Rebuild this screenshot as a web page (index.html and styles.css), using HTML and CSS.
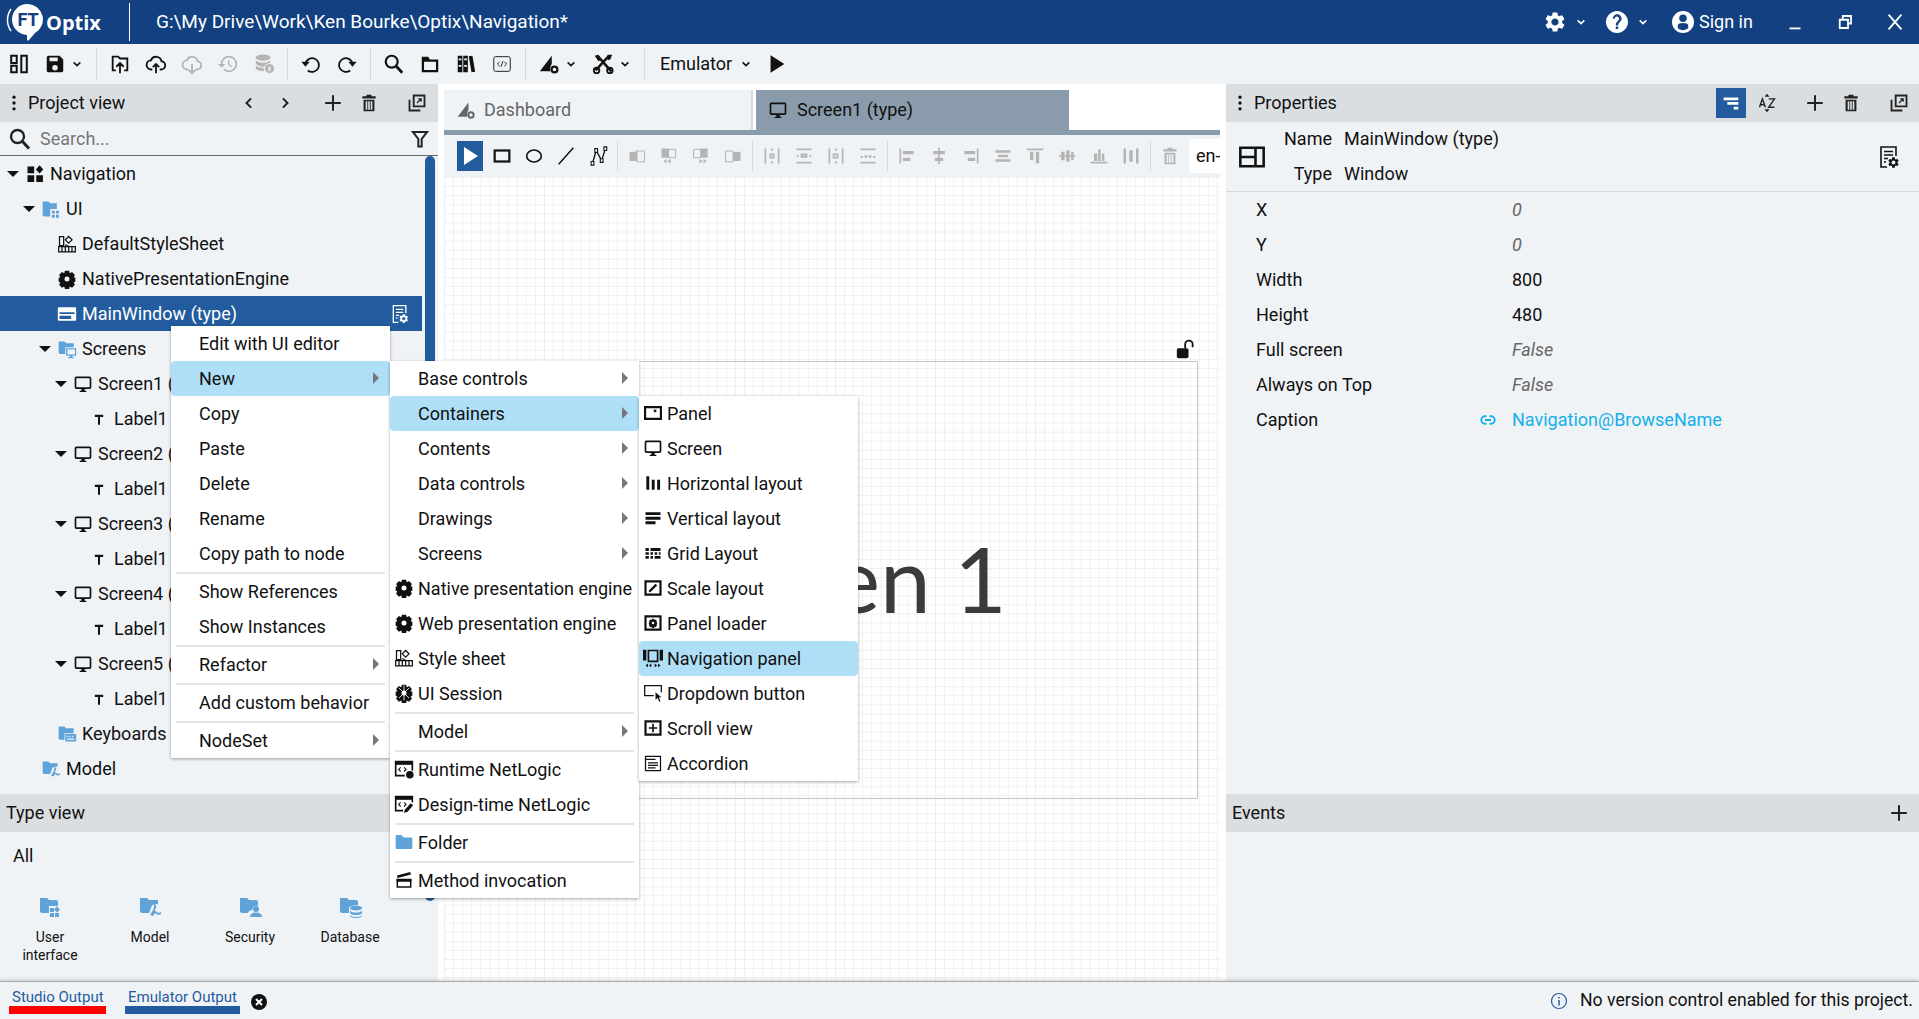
FILE: index.html
```html
<!DOCTYPE html>
<html lang="en">
<head>
<meta charset="utf-8">
<title>FT Optix Studio</title>
<link rel="stylesheet" href="styles.css">
</head>
<body>
<svg class="sprite" xmlns="http://www.w3.org/2000/svg">
  <symbol id="gear" viewBox="0 0 24 24"><path d="M19.14 12.94c.04-.3.06-.61.06-.94 0-.32-.02-.64-.07-.94l2.03-1.58a.49.49 0 0 0 .12-.61l-1.92-3.32a.488.488 0 0 0-.59-.22l-2.39.96c-.5-.38-1.03-.7-1.62-.94l-.36-2.54a.484.484 0 0 0-.48-.41h-3.84c-.24 0-.43.17-.47.41l-.36 2.54c-.59.24-1.13.57-1.62.94l-2.39-.96c-.22-.08-.47 0-.59.22L2.74 8.87c-.12.21-.08.47.12.61l2.03 1.58c-.05.3-.09.63-.09.94s.02.64.07.94l-2.03 1.58a.49.49 0 0 0-.12.61l1.92 3.32c.12.22.37.29.59.22l2.39-.96c.5.38 1.03.7 1.62.94l.36 2.54c.05.24.24.41.48.41h3.84c.24 0 .44-.17.47-.41l.36-2.54c.59-.24 1.13-.56 1.62-.94l2.39.96c.22.08.47 0 .59-.22l1.92-3.32c.12-.22.07-.47-.12-.61l-2.01-1.58zM12 15.6c-1.98 0-3.6-1.62-3.6-3.6s1.62-3.6 3.6-3.6 3.6 1.62 3.6 3.6-1.62 3.6-3.6 3.6z"/></symbol>
  <symbol id="cog" viewBox="0 0 24 24"><path fill-rule="evenodd" d="M9.5 2h5l.8 3 2.8-1.4 3.4 3.6L20 10l2 .6v4.8l-2 .6 1.5 2.800-3.400 3.600-2.800-1.400-.8 3h-5l-.8-3-2.800 1.400-3.400-3.600L4 16l-2-.6v-4.800L4 10 2.500 7.200l3.400-3.600L8.700 5zM12 9a3 3 0 1 0 0 6 3 3 0 0 0 0-6z"/></symbol>
  <symbol id="help" viewBox="0 0 24 24"><path d="M12 1C6 1 1 6 1 12s5 11 11 11 11-5 11-11S18 1 12 1zm1.200 18h-2.400v-2.400h2.400V19zm2.300-7.700l-.9.900c-1 1-1.400 1.700-1.400 3.200h-2.400v-.6c0-1.300.5-2.300 1.300-3.100l1.400-1.400c.4-.4.600-1 .600-1.600 0-1.200-1-2.200-2.200-2.200s-2.200 1-2.200 2.200H7.800c0-2.500 2-4.500 4.400-4.500s4.400 2 4.400 4.500c0 1-.4 1.900-1.100 2.600z"/></symbol>
  <symbol id="user" viewBox="0 0 24 24"><path fill-rule="evenodd" d="M12 1a11 11 0 1 0 0 22 11 11 0 0 0 0-22zM12 4.500a3.800 3.800 0 0 1 3.800 3.800A3.800 3.800 0 0 1 12 12a3.800 3.800 0 0 1-3.800-3.700A3.800 3.800 0 0 1 12 4.500zM6.800 18v-2.500c0-1.800 2.500-2.500 5.200-2.500s5.200.7 5.200 2.500V18c-1.300 1.300-3.200 2.200-5.200 2.200S8.100 19.300 6.800 18z"/></symbol>
  <symbol id="chev" viewBox="0 0 12 12"><path d="M1 3.500l5 5 5-5" fill="none" stroke="currentColor" stroke-width="2.400"/></symbol>
  <symbol id="panels" viewBox="0 0 24 24"><path d="M3.500 3h6v8h-6zM3.500 14h6v7h-6zM14.500 3h6v18h-6z" fill="none" stroke="currentColor" stroke-width="2.200"/></symbol>
  <symbol id="save" viewBox="0 0 24 24"><path d="M17 3H5a2 2 0 0 0-2 2v14a2 2 0 0 0 2 2h14a2 2 0 0 0 2-2V7l-4-4zm-5 16a3 3 0 1 1 0-6 3 3 0 0 1 0 6zm3-10H6V5h9v4z"/></symbol>
  <symbol id="fup" viewBox="0 0 24 24"><path d="M7.500 19H4V4h6l2 2h8v13h-3.500M12 22V11M8 15l4-4 4 4" fill="none" stroke="currentColor" stroke-width="2"/></symbol>
  <symbol id="cup" viewBox="0 0 24 24"><path d="M8 18H7a5 5 0 0 1-.5-10A6 6 0 0 1 18 9a4.500 4.500 0 0 1-1 9h-1M12 22V12M8.500 15.500L12 12l3.500 3.500" fill="none" stroke="currentColor" stroke-width="2"/></symbol>
  <symbol id="cdown" viewBox="0 0 24 24"><path d="M8 18H7a5 5 0 0 1-.5-10A6 6 0 0 1 18 9a4.500 4.500 0 0 1-1 9h-1M12 12v10M8.500 18.500L12 22l3.500-3.500" fill="none" stroke="currentColor" stroke-width="2"/></symbol>
  <symbol id="history" viewBox="0 0 24 24"><path d="M13 3a9 9 0 0 0-9 9H1l3.890 3.890.070.140L9 12H6c0-3.870 3.130-7 7-7s7 3.130 7 7-3.130 7-7 7c-1.930 0-3.680-.790-4.940-2.060l-1.420 1.420A8.954 8.954 0 0 0 13 21a9 9 0 0 0 0-18zm-1 5v5l4.280 2.540.720-1.210-3.500-2.080V8H12z"/></symbol>
  <symbol id="dbg" viewBox="0 0 24 24"><ellipse cx="11" cy="5" rx="8" ry="3.500"/><path d="M3 7.500c1 2 4 3 8 3s7-1 8-3V11c-3 0-6 2-7 4-5 0-8-1.500-9-3.500zM3 13.500c1.500 1.500 4 2.500 8.500 2.500l.5 4c-5 0-8-1-9-3z"/><circle cx="18" cy="17" r="5"/><rect x="17" y="15" width="2" height="5" fill="#f0f3f6"/></symbol>
  <symbol id="undo" viewBox="0 0 24 24"><path d="M6 11a7.500 7.500 0 1 1 2.500 8" fill="none" stroke="currentColor" stroke-width="2"/><path d="M1.500 9.500h9L6 15z"/></symbol>
  <symbol id="redo" viewBox="0 0 24 24"><path d="M18 11a7.500 7.500 0 1 0-2.500 8" fill="none" stroke="currentColor" stroke-width="2"/><path d="M22.500 9.500h-9L18 15z"/></symbol>
  <symbol id="search" viewBox="0 0 24 24"><circle cx="9.500" cy="9.500" r="6.500" fill="none" stroke="currentColor" stroke-width="2.400"/><path d="M14.500 14.500L21 21.500" stroke="currentColor" stroke-width="3"/></symbol>
  <symbol id="folderln" viewBox="0 0 24 24"><path d="M3 4h7l2 3h9v14H3zM5.500 9.500v9h13v-9z" fill-rule="evenodd"/></symbol>
  <symbol id="lib" viewBox="0 0 24 24"><path fill-rule="evenodd" d="M3 3h5v18H3zM9 3h5v18H9zM15 3.500l4-.5 3 17.500-4 .5zM4 6v2h3V6zM4 13v2h3v-2zM10 6v2h3V6zM10 13v2h3v-2z"/></symbol>
  <symbol id="code" viewBox="0 0 24 24"><rect x="3" y="4" width="18" height="16" rx="2" fill="none" stroke="currentColor" stroke-width="1"/><path d="M9.500 9.500L7 12l2.500 2.500M14.500 9.500L17 12l-2.500 2.500M13 9l-2 6" fill="none" stroke="currentColor" stroke-width="1"/></symbol>
  <symbol id="dash" viewBox="0 0 24 24"><path d="M15 3L2 20h11.500c-.5-4 .5-7 1.500-8z"/><circle cx="18" cy="18" r="3.200" fill="none" stroke="currentColor" stroke-width="2.400"/></symbol>
  <symbol id="tools" viewBox="0 0 24 24"><path d="M6 3l15 17M18.500 3L4 19" fill="none" stroke="currentColor" stroke-width="2.800"/><circle cx="5" cy="19" r="3" fill="none" stroke="currentColor" stroke-width="2"/><circle cx="19.500" cy="19" r="3" fill="none" stroke="currentColor" stroke-width="2"/><path d="M3 3l4-1 3 5-3 2zM17 2h5l-2 5-3 1z"/></symbol>
  <symbol id="play" viewBox="0 0 24 24"><path d="M5 2.500l15 9.500-15 9.500z"/></symbol>
  <symbol id="dots" viewBox="0 0 24 24"><circle cx="12" cy="5" r="2"/><circle cx="12" cy="12" r="2"/><circle cx="12" cy="19" r="2"/></symbol>
  <symbol id="cl" viewBox="0 0 24 24"><path d="M14.500 6.500L9 12l5.500 5.500" fill="none" stroke="currentColor" stroke-width="2.400"/></symbol>
  <symbol id="cr" viewBox="0 0 24 24"><path d="M9.500 6.500L15 12l-5.500 5.500" fill="none" stroke="currentColor" stroke-width="2.400"/></symbol>
  <symbol id="plus" viewBox="0 0 24 24"><path d="M12 3.500v17M3.500 12h17" stroke="currentColor" stroke-width="2.200"/></symbol>
  <symbol id="trash" viewBox="0 0 24 24"><path fill-rule="evenodd" d="M9 2h6v2h5v2.500H4V4h5zM5.500 8h13v14h-13zM8 10v10h2V10zM11 10v10h2V10zM14 10v10h2V10z"/></symbol>
  <symbol id="popout" viewBox="0 0 24 24"><path d="M8 3h13v13H8zM3 8v13h13" fill="none" stroke="currentColor" stroke-width="2.200"/><path d="M12 12l5-5M13.500 7H17v3.500" fill="none" stroke="currentColor" stroke-width="1.500"/></symbol>
  <symbol id="filter" viewBox="0 0 24 24"><path d="M3.500 3.500h17L14 12v9h-4v-9z" fill="none" stroke="currentColor" stroke-width="2.400"/></symbol>
  <symbol id="nav" viewBox="0 0 24 24"><path d="M3 3h8v8H3zM3 13.500h8v8H3zM13.500 13.500h8v8h-8zM17.500 1.500l4.500 5-4.500 5-4.500-5z"/></symbol>
  <symbol id="fui" viewBox="0 0 24 24"><path d="M2 3h7l2 2h8v7h-8v9H4a2 2 0 0 1-2-2z" fill="#5fa3d9"/><path d="M13 14h3.500v3.500H13zM18 14h3.500v3.500H18zM13 19h3.500v3.500H13zM18 19h3.500v3.500H18z" fill="#5fa3d9"/></symbol>
  <symbol id="fscr" viewBox="0 0 24 24"><path d="M2 3h7l2 2h9v5H10v8H4a2 2 0 0 1-2-2z" fill="#5fa3d9"/><path fill-rule="evenodd" d="M11 11h12v9h-4.500v1.500H20V23h-6.500v-1.500h2V20H11zM12.500 12.500v6h9v-6z" fill="#5fa3d9"/></symbol>
  <symbol id="fkbd" viewBox="0 0 24 24"><path d="M2 3h7l2 2h9v6H9v8H4a2 2 0 0 1-2-2z" fill="#5fa3d9"/><path fill-rule="evenodd" d="M10 12h13v9H10zM12 14v1.500h1.500V14zM15 14v1.500h1.500V14zM18 14v1.500h1.500V14zM12 17.500V19h9v-1.500z" fill="#5fa3d9"/></symbol>
  <symbol id="fmodel" viewBox="0 0 24 24"><path d="M2 3h7l2 2h9v4l-6 1-3 8H4a2 2 0 0 1-2-2z" fill="#5fa3d9"/><path d="M16 8l2.500 4-2 3.500 4 2.500 2.500-1v2l-3 1-3-2-2 3-3-1 3-5 1-3z" fill="#5fa3d9"/></symbol>
  <symbol id="fui2" viewBox="0 0 24 24"><path d="M2 3h7l2 2h7a2 2 0 0 1 2 2v4h-9v7H4a2 2 0 0 1-2-2z" fill="#5fa3d9"/><path d="M12 13h4v4h-4zM12 18h4v4h-4zM17 18h4v4h-4zM19 11.500l3 3-3 3-3-3z" fill="#5fa3d9"/></symbol>
  <symbol id="fsec" viewBox="0 0 24 24"><path d="M2 3h7l2 2h7a2 2 0 0 1 2 2v4c-3-1-6 1-5.500 4-3 .5-4.500 2-4.500 3H4a2 2 0 0 1-2-2z" fill="#5fa3d9"/><circle cx="18" cy="14" r="3" fill="#5fa3d9"/><path d="M12 22c0-3 2.500-4.500 6-4.500s6 1.500 6 4.500z" fill="#5fa3d9"/></symbol>
  <symbol id="fdb" viewBox="0 0 24 24"><path d="M2 3h7l2 2h7a2 2 0 0 1 2 2v3c-4 0-9 1-9 3v5H4a2 2 0 0 1-2-2z" fill="#5fa3d9"/><ellipse cx="18" cy="13" rx="6" ry="2.500" fill="#5fa3d9"/><path d="M12 15.500c1 1.500 3 2 6 2s5-.5 6-2V18c-1 1.500-3 2-6 2s-5-.5-6-2zM12 20c1 1.500 3 2 6 2s5-.5 6-2v1c-1 1.500-3 2-6 2s-5-.5-6-2z" fill="#5fa3d9"/></symbol>
  <symbol id="folder" viewBox="0 0 24 24"><path d="M2 5a1.500 1.500 0 0 1 1.500-1.500H9l2.500 3h9A1.500 1.500 0 0 1 22 8v11a1.500 1.500 0 0 1-1.500 1.500h-17A1.500 1.500 0 0 1 2 19z" fill="#5fa3d9"/></symbol>
  <symbol id="style" viewBox="0 0 24 24"><path d="M3 3h5v11H3z" fill="none" stroke="currentColor" stroke-width="1.500"/><path d="M14 3l4 4-4 4-4-4z" fill="none" stroke="currentColor" stroke-width="1.500"/><path d="M10 12l5 2h-5z"/><path d="M2 15h20v6.500H2zM6 15v6.500M10 15v6.500M14 15v6.500M18 15v6.500" fill="none" stroke="currentColor" stroke-width="1.500"/></symbol>
  <symbol id="window" viewBox="0 0 24 24"><path fill-rule="evenodd" d="M2 4h20a1 1 0 0 1 1 1v14a1 1 0 0 1-1 1H2a1 1 0 0 1-1-1V5a1 1 0 0 1 1-1zm1 6v2h18v-2zm0 4v4h14v-4z"/></symbol>
  <symbol id="mon" viewBox="0 0 24 24"><path d="M20 3H4a2 2 0 0 0-2 2v11a2 2 0 0 0 2 2h6v2H8v1.500h8V20h-2v-2h6a2 2 0 0 0 2-2V5a2 2 0 0 0-2-2zm0 13H4V5h16v11z"/></symbol>
  <symbol id="lbl" viewBox="0 0 24 24"><path d="M7 7h10v2.500h-3.800V19h-2.400V9.500H7z"/></symbol>
  <symbol id="docgear" viewBox="0 0 24 24"><path d="M10 22H4V2h15v9" fill="none" stroke="currentColor" stroke-width="1.600"/><path d="M7 6.500h9M7 10h9M7 13.500h4M7 17h2" stroke="currentColor" stroke-width="1.500"/><use href="#gear" x="10" y="11" width="13" height="13"/></symbol>
  <symbol id="funnel" viewBox="0 0 24 24"><path d="M4 6h16v3H4zM8 11h12v3H8zM15 16h5v3h-5z"/></symbol>
  <symbol id="az" viewBox="0 0 24 24"><path d="M12 1l3 3.500H9zM12 23l-3-3.500h6z"/><path d="M3 17l3.500-10L10 17M4.300 14h4.500M14 7h7l-7 10h7" fill="none" stroke="currentColor" stroke-width="1.700"/></symbol>
  <symbol id="winlay" viewBox="0 0 24 24"><path d="M2 4h20v16H2zM2 12h13M15 4v16" fill="none" stroke="currentColor" stroke-width="2.200"/></symbol>
  <symbol id="link" viewBox="0 0 24 24"><path d="M10 7H8a5 5 0 0 0 0 10h2M14 7h2a5 5 0 0 1 0 10h-2M8 12h8" fill="none" stroke="currentColor" stroke-width="2.500"/></symbol>
  <symbol id="info" viewBox="0 0 24 24"><circle cx="12" cy="12" r="10" fill="none" stroke="currentColor" stroke-width="1.600"/><path d="M11 10.500h2V18h-2zM11 6.500h2v2h-2z"/></symbol>
  <symbol id="xc" viewBox="0 0 24 24"><circle cx="12" cy="12" r="12"/><path d="M7.500 7.500l9 9M16.500 7.500l-9 9" stroke="#fff" stroke-width="3"/></symbol>
  <symbol id="lock" viewBox="0 0 24 24"><rect x="1" y="11" width="14" height="12" rx="2"/><path d="M11 11V6.500a4.500 4.500 0 0 1 9 0V10" fill="none" stroke="currentColor" stroke-width="2.200"/></symbol>
  <symbol id="min" viewBox="0 0 24 24"><path d="M6 19h12" stroke="currentColor" stroke-width="2"/></symbol>
  <symbol id="rest" viewBox="0 0 24 24"><path d="M9 8V4h11v10h-4M5 9h11v11H5z" fill="none" stroke="currentColor" stroke-width="2.400"/></symbol>
  <symbol id="x" viewBox="0 0 24 24"><path d="M5 4l14 16M19 4L5 20" stroke="currentColor" stroke-width="2"/></symbol>
  <symbol id="pointer" viewBox="0 0 24 24"><path d="M6 3l14 9-14 9z"/></symbol>
  <symbol id="rect" viewBox="0 0 24 24"><rect x="4" y="6" width="16" height="12" fill="none" stroke="currentColor" stroke-width="2.400"/></symbol>
  <symbol id="ell" viewBox="0 0 24 24"><ellipse cx="12" cy="12" rx="8" ry="6.500" fill="none" stroke="currentColor" stroke-width="1.800"/></symbol>
  <symbol id="line" viewBox="0 0 24 24"><path d="M4 21L20 3" stroke="currentColor" stroke-width="1.600"/></symbol>
  <symbol id="poly" viewBox="0 0 24 24"><path d="M6 20L10 6l6 11 4-13" fill="none" stroke="currentColor" stroke-width="1.500"/><path d="M4.500 18h3v4h-3zM8.500 4h3v4h-3zM14.500 15h3v4h-3zM18.500 2h3v4h-3z" fill="#fff" stroke="currentColor" stroke-width="1.200"/></symbol>
  <symbol id="g1" viewBox="0 0 24 24"><path d="M3 7h9v11H3z"/><path d="M12 6h9v13h-9zM10 6h2" fill="none" stroke="currentColor" stroke-width="1.200"/></symbol>
  <symbol id="g2" viewBox="0 0 24 24"><path d="M3 3h9v11H3z"/><path d="M11 4h9v10h-9z" fill="none" stroke="currentColor" stroke-width="1.200"/><path d="M5 18l4-2.500V21zM10 18l4-2.500V21z"/></symbol>
  <symbol id="g3" viewBox="0 0 24 24"><path d="M3 4h9v10H3z" fill="none" stroke="currentColor" stroke-width="1.200"/><path d="M11 3h9v11h-9z"/><path d="M19 18l-4-2.500V21zM14 18l-4-2.500V21z"/></symbol>
  <symbol id="g4" viewBox="0 0 24 24"><path d="M3 6h9v13H3z" fill="none" stroke="currentColor" stroke-width="1.200"/><path d="M12 7h9v11h-9z"/></symbol>
  <symbol id="d1" viewBox="0 0 24 24"><path d="M3 3h2v18H3zM19 3h2v18h-2zM11 3h2v3h-2zM11 18h2v3h-2zM9 9h6v6H9zM11 11v2h2v-2z" fill-rule="evenodd"/></symbol>
  <symbol id="d2" viewBox="0 0 24 24"><path d="M3 3h18v2H3zM3 19h18v2H3zM3 11h3v2H3zM18 11h3v2h-3zM8 9h8v5H8zM10.500 11v1H13v-1z" fill-rule="evenodd"/></symbol>
  <symbol id="d3" viewBox="0 0 24 24"><path d="M3 3h2v18H3zM19 3h2v18h-2zM11 3h2v3h-2zM11 18h2v3h-2zM8 9h7v6H8zM10 11v2h3v-2z" fill-rule="evenodd"/></symbol>
  <symbol id="d4" viewBox="0 0 24 24"><path d="M3 3h18v2H3zM3 19h18v2H3zM3 12h3v2H3zM18 12h3v2h-3zM8 11h3v3H8zM13 11h3v3h-3z"/></symbol>
  <symbol id="a1" viewBox="0 0 24 24"><path d="M3 3h2v18H3zM7 6h13v4H7zM7 14h9v4H7z"/></symbol>
  <symbol id="a2" viewBox="0 0 24 24"><path d="M11 2h2v20h-2zM5 6h14v4H5zM7 14h10v4H7z"/></symbol>
  <symbol id="a3" viewBox="0 0 24 24"><path d="M19 3h2v18h-2zM4 6h13v4H4zM8 14h9v4H8z"/></symbol>
  <symbol id="a4" viewBox="0 0 24 24"><path d="M3 5h18v3H3zM6 10.500h12v3H6zM3 16h18v3H3z"/></symbol>
  <symbol id="a5" viewBox="0 0 24 24"><path d="M2 3h20v2H2zM6 7h4v10H6zM13 7h4v14h-4z"/></symbol>
  <symbol id="a6" viewBox="0 0 24 24"><path d="M2 11h20v2H2zM5 7h4v10H5zM11 5h4v14h-4zM17 7h3v10h-3z"/></symbol>
  <symbol id="a7" viewBox="0 0 24 24"><path d="M2 19h20v2H2zM6 9h4v9H6zM11 4h3v14h-3zM15.500 9h3v9h-3z"/></symbol>
  <symbol id="a8" viewBox="0 0 24 24"><path d="M3 3h3v18H3zM10 5h4v14h-4zM18 3h3v18h-3z"/></symbol>
  <symbol id="panel" viewBox="0 0 24 24"><path d="M2.500 5h19v14h-19z" fill="none" stroke="currentColor" stroke-width="2.600"/><path d="M13 8l3 3M16 8l-3 3" stroke="currentColor" stroke-width="1.300"/></symbol>
  <symbol id="hlay" viewBox="0 0 24 24"><path d="M4 4h3.500v16H4zM10.500 8H14v12h-3.500zM17 8h3.500v12H17z"/></symbol>
  <symbol id="vlay" viewBox="0 0 24 24"><path d="M3 5h18v3.500H3zM3 10.500h18V14H3zM3 16h12v3.500H3z"/></symbol>
  <symbol id="glay" viewBox="0 0 24 24"><path d="M3 6h4v3.500H3zM9 6h12v3.500H9zM3 11h4v3H3zM9 11h3v3H9zM14 11h3v3h-3zM19 11h2v3h-2zM3 15.500h4V19H3zM9 15.500h3V19H9zM14 15.500h7V19h-7z"/></symbol>
  <symbol id="scale" viewBox="0 0 24 24"><path d="M3 4h18v16H3z" fill="none" stroke="currentColor" stroke-width="2.600"/><path d="M6.500 15.500L15 7l2 2-8.500 8.500z"/></symbol>
  <symbol id="loader" viewBox="0 0 24 24"><path d="M3 4h18v16H3z" fill="none" stroke="currentColor" stroke-width="2.600"/><use href="#cog" x="6" y="6" width="12" height="12"/></symbol>
  <symbol id="navp" viewBox="0 0 24 24"><path d="M6.500 3h11v13h-11zM1 3h2v11H1zM21 3h2v11h-2z" fill="none" stroke="currentColor" stroke-width="2"/><path d="M3 21l3-2.500V23zM7 21l3-2.500V23zM21 21l-3-2.500V23zM17 21l-3-2.500V23z"/></symbol>
  <symbol id="drop" viewBox="0 0 24 24"><path d="M13 15H2V3h20v8" fill="none" stroke="currentColor" stroke-width="1.500"/><path d="M15 11l7 6-3 .5 2 4.500-1.500.5-2-4.500-2.500 2z"/></symbol>
  <symbol id="scroll" viewBox="0 0 24 24"><path d="M3 4h18v16H3z" fill="none" stroke="currentColor" stroke-width="2.600"/><path d="M11 7h2v10h-2zM7 11h10v2H7z"/></symbol>
  <symbol id="acc" viewBox="0 0 24 24"><path d="M3 4h18v17H3z" fill="none" stroke="currentColor" stroke-width="1.500"/><path d="M3 7h12v1.500H3zM6 11h12v1.500H6zM6 14h12v1.500H6zM6 17h9v1.500H6z"/></symbol>
  <symbol id="sess" viewBox="0 0 24 24"><use href="#cog"/><path d="M6 6l12 12M18 6L6 18M12 3v18" stroke="#fff" stroke-width="1"/></symbol>
  <symbol id="rt" viewBox="0 0 24 24"><path d="M13 20H2V3h20v11" fill="none" stroke="currentColor" stroke-width="2"/><path d="M2 3h20v4H2z"/><path d="M8 10l-2.500 2.500L8 15M12 10l2.500 2.500L12 15" fill="none" stroke="currentColor" stroke-width="1.300"/><circle cx="19" cy="19" r="4.500"/></symbol>
  <symbol id="dt" viewBox="0 0 24 24"><path d="M11 20H2V3h20v7" fill="none" stroke="currentColor" stroke-width="2"/><path d="M2 3h20v4H2z"/><path d="M8 10l-2.500 2.500L8 15M12 10l2.500 2.500L12 15" fill="none" stroke="currentColor" stroke-width="1.300"/><path d="M13 19l7-8 3 2.500-7 8-4 1z"/></symbol>
  <symbol id="meth" viewBox="0 0 24 24"><path d="M4 11.500h16v9H4z" fill="none" stroke="currentColor" stroke-width="1.800"/><path d="M3 11h18v3H3zM3.500 6.500l16-4 .8 3-16 4z"/></symbol>
</svg>

<div class="app">
  <header class="titlebar">
    <svg class="logo" viewBox="0 0 40 40"><path d="M7 7a19 19 0 0 0 0 22" fill="none" stroke="#fff" stroke-width="1.500"/><path d="M24 2a15.500 15.500 0 0 1 7 29l-6 7c-1 1-2 .5-2-1v-4A15.500 15.500 0 0 1 24 2z" fill="#fff"/><text class="logo-ft" x="24" y="24" text-anchor="middle">FT</text></svg>
    <span class="brand">Optix</span>
    <span class="title-div"></span>
    <span class="title-path">G:\My Drive\Work\Ken Bourke\Optix\Navigation*</span>
    <div class="title-right">
      <svg class="i i24"><use href="#gear"/></svg>
      <svg class="chev ml10"><use href="#chev"/></svg>
      <svg class="i i24 ml20"><use href="#help"/></svg>
      <svg class="chev ml10"><use href="#chev"/></svg>
      <svg class="i i24 ml24"><use href="#user"/></svg>
      <span class="signin">Sign in</span>
      <span class="winbtn"><svg class="i"><use href="#min"/></svg></span>
      <span class="winbtn"><svg class="i i18"><use href="#rest"/></svg></span>
      <span class="winbtn"><svg class="i"><use href="#x"/></svg></span>
    </div>
  </header>

  <div class="toolbar">
    <span class="tb"><svg class="i"><use href="#panels"/></svg></span>
    <span class="tb"><svg class="i"><use href="#save"/></svg></span>
    <svg class="chev"><use href="#chev"/></svg>
    <span class="sep wide-l"></span>
    <span class="tb"><svg class="i"><use href="#fup"/></svg></span>
    <span class="tb"><svg class="i"><use href="#cup"/></svg></span>
    <span class="tb off"><svg class="i"><use href="#cdown"/></svg></span>
    <span class="tb off"><svg class="i"><use href="#history"/></svg></span>
    <span class="tb off"><svg class="i"><use href="#dbg"/></svg></span>
    <span class="sep"></span>
    <span class="tb"><svg class="i"><use href="#undo"/></svg></span>
    <span class="tb"><svg class="i"><use href="#redo"/></svg></span>
    <span class="sep"></span>
    <span class="tb"><svg class="i"><use href="#search"/></svg></span>
    <span class="tb"><svg class="i"><use href="#folderln"/></svg></span>
    <span class="tb"><svg class="i"><use href="#lib"/></svg></span>
    <span class="tb"><svg class="i"><use href="#code"/></svg></span>
    <span class="sep"></span>
    <span class="tb"><svg class="i"><use href="#dash"/></svg></span>
    <svg class="chev"><use href="#chev"/></svg>
    <span class="tb ml10"><svg class="i"><use href="#tools"/></svg></span>
    <svg class="chev"><use href="#chev"/></svg>
    <span class="sep wide"></span>
    <span class="emu">Emulator</span>
    <svg class="chev ml10"><use href="#chev"/></svg>
    <span class="tb play"><svg class="i"><use href="#play"/></svg></span>
  </div>

  <main class="main">
    <section class="left">
      <div class="phead">
        <svg class="dots"><use href="#dots"/></svg>
        <span class="ptitle">Project view</span>
        <div class="pbtns">
          <span class="tb"><svg class="i i20"><use href="#cl"/></svg></span>
          <span class="tb"><svg class="i i20"><use href="#cr"/></svg></span>
          <span class="tb ml12"><svg class="i"><use href="#plus"/></svg></span>
          <span class="tb"><svg class="i i20"><use href="#trash"/></svg></span>
          <span class="tb ml12"><svg class="i i20"><use href="#popout"/></svg></span>
        </div>
      </div>
      <div class="search">
        <svg class="i i24"><use href="#search"/></svg>
        <span class="placeholder">Search...</span>
        <svg class="i i20 filter"><use href="#filter"/></svg>
      </div>
      <div class="tree">
        <div class="row d0"><span class="caret"></span><svg class="ticon"><use href="#nav"/></svg><span>Navigation</span></div>
        <div class="row d1"><span class="caret"></span><svg class="ticon"><use href="#fui"/></svg><span>UI</span></div>
        <div class="row d2"><span class="nocaret"></span><svg class="ticon"><use href="#style"/></svg><span>DefaultStyleSheet</span></div>
        <div class="row d2"><span class="nocaret"></span><svg class="ticon"><use href="#cog"/></svg><span>NativePresentationEngine</span></div>
        <div class="row d2 sel"><span class="nocaret"></span><svg class="ticon"><use href="#window"/></svg><span>MainWindow (type)</span><svg class="i i20 rowact"><use href="#docgear"/></svg></div>
        <div class="row d2"><span class="caret"></span><svg class="ticon"><use href="#fscr"/></svg><span>Screens</span></div>
        <div class="row d3"><span class="caret"></span><svg class="ticon"><use href="#mon"/></svg><span>Screen1 (type)</span></div>
        <div class="row d4"><span class="nocaret"></span><svg class="ticon"><use href="#lbl"/></svg><span>Label1</span></div>
        <div class="row d3"><span class="caret"></span><svg class="ticon"><use href="#mon"/></svg><span>Screen2 (type)</span></div>
        <div class="row d4"><span class="nocaret"></span><svg class="ticon"><use href="#lbl"/></svg><span>Label1</span></div>
        <div class="row d3"><span class="caret"></span><svg class="ticon"><use href="#mon"/></svg><span>Screen3 (type)</span></div>
        <div class="row d4"><span class="nocaret"></span><svg class="ticon"><use href="#lbl"/></svg><span>Label1</span></div>
        <div class="row d3"><span class="caret"></span><svg class="ticon"><use href="#mon"/></svg><span>Screen4 (type)</span></div>
        <div class="row d4"><span class="nocaret"></span><svg class="ticon"><use href="#lbl"/></svg><span>Label1</span></div>
        <div class="row d3"><span class="caret"></span><svg class="ticon"><use href="#mon"/></svg><span>Screen5 (type)</span></div>
        <div class="row d4"><span class="nocaret"></span><svg class="ticon"><use href="#lbl"/></svg><span>Label1</span></div>
        <div class="row d2"><span class="nocaret"></span><svg class="ticon"><use href="#fkbd"/></svg><span>Keyboards</span></div>
        <div class="row d1"><span class="nocaret"></span><svg class="ticon"><use href="#fmodel"/></svg><span>Model</span></div>
      </div>
      <div class="phead plain"><span class="ptitle">Type view</span></div>
      <div class="types">
        <div class="all">All</div>
        <div class="type-grid">
          <div class="type"><svg class="ttype"><use href="#fui2"/></svg><span>User interface</span></div>
          <div class="type"><svg class="ttype"><use href="#fmodel"/></svg><span>Model</span></div>
          <div class="type"><svg class="ttype"><use href="#fsec"/></svg><span>Security</span></div>
          <div class="type"><svg class="ttype"><use href="#fdb"/></svg><span>Database</span></div>
        </div>
      </div>
      <div class="vscroll"></div>
    </section>

    <section class="center">
      <div class="tabs">
        <div class="tab"><svg class="i i20"><use href="#dash"/></svg><span>Dashboard</span></div>
        <div class="tab active"><svg class="i i20"><use href="#mon"/></svg><span>Screen1 (type)</span></div>
      </div>
      <div class="tools">
        <span class="tool cur"><svg class="i i24"><use href="#pointer"/></svg></span>
        <span class="tool"><svg class="i"><use href="#rect"/></svg></span>
        <span class="tool"><svg class="i"><use href="#ell"/></svg></span>
        <span class="tool"><svg class="i"><use href="#line"/></svg></span>
        <span class="tool"><svg class="i"><use href="#poly"/></svg></span>
        <span class="tsep"></span>
        <span class="tool off"><svg class="i i20"><use href="#g1"/></svg></span>
        <span class="tool off"><svg class="i i20"><use href="#g2"/></svg></span>
        <span class="tool off"><svg class="i i20"><use href="#g3"/></svg></span>
        <span class="tool off"><svg class="i i20"><use href="#g4"/></svg></span>
        <span class="tsep"></span>
        <span class="tool off"><svg class="i i20"><use href="#d1"/></svg></span>
        <span class="tool off"><svg class="i i20"><use href="#d2"/></svg></span>
        <span class="tool off"><svg class="i i20"><use href="#d3"/></svg></span>
        <span class="tool off"><svg class="i i20"><use href="#d4"/></svg></span>
        <span class="tsep"></span>
        <span class="tool off"><svg class="i i20"><use href="#a1"/></svg></span>
        <span class="tool off"><svg class="i i20"><use href="#a2"/></svg></span>
        <span class="tool off"><svg class="i i20"><use href="#a3"/></svg></span>
        <span class="tool off"><svg class="i i20"><use href="#a4"/></svg></span>
        <span class="tool off"><svg class="i i20"><use href="#a5"/></svg></span>
        <span class="tool off"><svg class="i i20"><use href="#a6"/></svg></span>
        <span class="tool off"><svg class="i i20"><use href="#a7"/></svg></span>
        <span class="tool off"><svg class="i i20"><use href="#a8"/></svg></span>
        <span class="tsep"></span>
        <span class="tool off"><svg class="i i20"><use href="#trash"/></svg></span>
        <span class="locale">en-</span>
      </div>
      <div class="canvas">
        <div class="artboard"><span class="art-text">Screen 1</span></div>
        <svg class="lock"><use href="#lock"/></svg>
      </div>
    </section>

    <section class="right">
      <div class="phead">
        <svg class="dots"><use href="#dots"/></svg>
        <span class="ptitle">Properties</span>
        <div class="pbtns rbtns">
          <span class="tb cur"><svg class="i"><use href="#funnel"/></svg></span>
          <span class="tb az"><svg class="i i20"><use href="#az"/></svg></span>
          <span class="tb ml12"><svg class="i"><use href="#plus"/></svg></span>
          <span class="tb"><svg class="i i20"><use href="#trash"/></svg></span>
          <span class="tb ml12"><svg class="i i20"><use href="#popout"/></svg></span>
        </div>
      </div>
      <div class="identity">
        <svg class="i i28 id-icon"><use href="#winlay"/></svg>
        <div class="id-grid">
          <span class="id-k">Name</span><span>MainWindow (type)</span>
          <span class="id-k">Type</span><span>Window</span>
        </div>
        <svg class="i i24 id-act"><use href="#docgear"/></svg>
      </div>
      <div class="props">
        <div class="prop"><span class="pk">X</span><span class="pslot"></span><span class="pv dim">0</span></div>
        <div class="prop"><span class="pk">Y</span><span class="pslot"></span><span class="pv dim">0</span></div>
        <div class="prop"><span class="pk">Width</span><span class="pslot"></span><span class="pv">800</span></div>
        <div class="prop"><span class="pk">Height</span><span class="pslot"></span><span class="pv">480</span></div>
        <div class="prop"><span class="pk">Full screen</span><span class="pslot"></span><span class="pv dim">False</span></div>
        <div class="prop"><span class="pk">Always on Top</span><span class="pslot"></span><span class="pv dim">False</span></div>
        <div class="prop"><span class="pk">Caption</span><span class="pslot"><svg class="i i18 lnk"><use href="#link"/></svg></span><span class="pv lnk">Navigation@BrowseName</span></div>
      </div>
      <div class="phead plain events"><span class="ptitle">Events</span><svg class="i evplus"><use href="#plus"/></svg></div>
      <div class="evbody"></div>
    </section>
  </main>

  <footer class="status">
    <div class="otab red">Studio Output</div>
    <div class="otab blue">Emulator Output</div>
    <svg class="xc"><use href="#xc"/></svg>
    <div class="vc"><svg class="i i18 vcicon"><use href="#info"/></svg><span>No version control enabled for this project.</span></div>
  </footer>

  <div class="menu m1">
    <div class="mi">Edit with UI editor</div>
    <div class="mi on sub">New</div>
    <div class="mi">Copy</div>
    <div class="mi">Paste</div>
    <div class="mi">Delete</div>
    <div class="mi">Rename</div>
    <div class="mi">Copy path to node</div>
    <div class="ms"></div>
    <div class="mi">Show References</div>
    <div class="mi">Show Instances</div>
    <div class="ms"></div>
    <div class="mi sub">Refactor</div>
    <div class="ms"></div>
    <div class="mi">Add custom behavior</div>
    <div class="ms"></div>
    <div class="mi sub">NodeSet</div>
  </div>

  <div class="menu m2">
    <div class="mi sub">Base controls</div>
    <div class="mi on sub">Containers</div>
    <div class="mi sub">Contents</div>
    <div class="mi sub">Data controls</div>
    <div class="mi sub">Drawings</div>
    <div class="mi sub">Screens</div>
    <div class="mi"><svg class="mic"><use href="#cog"/></svg>Native presentation engine</div>
    <div class="mi"><svg class="mic"><use href="#cog"/></svg>Web presentation engine</div>
    <div class="mi"><svg class="mic"><use href="#style"/></svg>Style sheet</div>
    <div class="mi"><svg class="mic"><use href="#sess"/></svg>UI Session</div>
    <div class="ms"></div>
    <div class="mi sub">Model</div>
    <div class="ms"></div>
    <div class="mi"><svg class="mic"><use href="#rt"/></svg>Runtime NetLogic</div>
    <div class="mi"><svg class="mic"><use href="#dt"/></svg>Design-time NetLogic</div>
    <div class="ms"></div>
    <div class="mi"><svg class="mic"><use href="#folder"/></svg>Folder</div>
    <div class="ms"></div>
    <div class="mi"><svg class="mic"><use href="#meth"/></svg>Method invocation</div>
  </div>

  <div class="menu m3">
    <div class="mi"><svg class="mic"><use href="#panel"/></svg>Panel</div>
    <div class="mi"><svg class="mic"><use href="#mon"/></svg>Screen</div>
    <div class="mi"><svg class="mic"><use href="#hlay"/></svg>Horizontal layout</div>
    <div class="mi"><svg class="mic"><use href="#vlay"/></svg>Vertical layout</div>
    <div class="mi"><svg class="mic"><use href="#glay"/></svg>Grid Layout</div>
    <div class="mi"><svg class="mic"><use href="#scale"/></svg>Scale layout</div>
    <div class="mi"><svg class="mic"><use href="#loader"/></svg>Panel loader</div>
    <div class="mi on"><svg class="mic"><use href="#navp"/></svg>Navigation panel</div>
    <div class="mi"><svg class="mic"><use href="#drop"/></svg>Dropdown button</div>
    <div class="mi"><svg class="mic"><use href="#scroll"/></svg>Scroll view</div>
    <div class="mi"><svg class="mic"><use href="#acc"/></svg>Accordion</div>
  </div>
</div>
</body>
</html>
```

FILE: styles.css
```css
* { box-sizing: border-box; }
html, body { margin: 0; height: 100%; overflow: hidden; }
body { font: 18px/1.2 Roboto, "Liberation Sans", sans-serif; color: #111; background: #f0f3f6; }
.sprite { display: none; }
.app { position: relative; height: 100vh; display: flex; flex-direction: column; }

.i { width: 22px; height: 22px; fill: currentColor; flex: none; display: block; }
.i18 { width: 18px; height: 18px; }
.i20 { width: 20px; height: 20px; }
.i24 { width: 24px; height: 24px; }
.i28 { width: 28px; height: 28px; }
.chev { width: 8px; height: 8px; flex: none; display: block; }
.ml10 { margin-left: 10px; }
.ml12 { margin-left: 12px; }
.ml20 { margin-left: 20px; }
.ml24 { margin-left: 24px; }

.titlebar { height: 44px; flex: none; display: flex; align-items: center; background: #124081; color: #fff; padding-left: 4px; }
.logo { width: 40px; height: 40px; flex: none; }
.logo-ft { font: 700 18px Roboto, sans-serif; fill: #124081; }
.brand { font: 700 20px "Open Sans", sans-serif; margin-left: 2px; width: 57px; }
.title-div { width: 1px; height: 38px; background: #fff; margin-left: 26px; }
.title-path { margin-left: 26px; font-size: 19px; }
.title-right { margin-left: auto; display: flex; align-items: center; margin-right: -1px; }
.signin { margin-left: 4px; width: 56px; margin-right: 15px; white-space: nowrap; }
.winbtn { width: 50px; display: flex; justify-content: center; }

.toolbar { height: 40px; flex: none; display: flex; align-items: center; padding-left: 1px; background: #f0f3f6; }
.tb { width: 36px; height: 30px; display: flex; align-items: center; justify-content: center; flex: none; }
.off { color: #b4b4b4; }
.sep { width: 1px; height: 32px; background: #d6dade; margin: 0 5px; flex: none; }
.wide-l { margin-left: 15px; }
.wide { margin: 0 15px; }
.emu { width: 72px; }
.play { margin-left: 9px; }

.main { flex: 1; min-height: 0; display: flex; }
.left { width: 438px; flex: none; display: flex; flex-direction: column; position: relative; background: #f0f3f6; }
.phead { height: 38px; flex: none; display: flex; align-items: center; background: #dbdee1; }
.plain .ptitle { margin-left: 6px; }
.dots { width: 28px; height: 20px; fill: #111; flex: none; }
.pbtns { margin-left: auto; display: flex; align-items: center; padding-right: 3px; color: #222; }
.rbtns { padding-right: 2px; }
.cur { background: #235c9e; color: #fff; }
.tb.cur { width: 30px; }
.az { margin-left: 3px; }

.search { height: 34px; flex: none; display: flex; align-items: center; padding: 0 8px; border-bottom: 1px solid #666; color: #222; }
.placeholder { margin-left: 8px; color: #777; }
.filter { margin-left: auto; }

.tree { flex: 1; min-height: 0; overflow: hidden; }
.row { height: 35px; width: 422px; display: flex; align-items: center; white-space: nowrap; }
.d0 { padding-left: 5px; }
.d1 { padding-left: 21px; }
.d2 { padding-left: 37px; }
.d3 { padding-left: 53px; }
.d4 { padding-left: 69px; }
.caret, .nocaret { width: 16px; margin-right: 4px; flex: none; }
.caret { height: 0; border: 6px solid transparent; border-top: 6px solid #111; border-bottom: 0; width: 0; margin-left: 2px; margin-right: 6px; }
.ticon { width: 20px; height: 20px; margin-right: 5px; fill: #111; flex: none; }
.sel { background: #235c9e; color: #fff; }
.sel .ticon { fill: #fff; }
.rowact { margin-left: auto; margin-right: 12px; }

.types { height: 149px; flex: none; }
.all { padding: 13px 0 0 13px; height: 48px; }
.type-grid { display: grid; grid-template-columns: repeat(4, 100px); margin: 15px 0 0 0; }
.type { display: flex; flex-direction: column; align-items: center; text-align: center; font-size: 14px; line-height: 18px; }
.type span { width: 80px; }
.ttype { width: 24px; height: 24px; margin-bottom: 9px; }
.vscroll { position: absolute; left: 425px; top: 72px; width: 10px; height: 745px; border-radius: 5px; background: #235c9e; }

.center { width: 788px; flex: none; display: flex; flex-direction: column; padding: 6px 6px 0; background: #fff; }
.tabs { height: 40px; flex: none; display: flex; background: #fff; }
.tab { width: 309px; display: flex; align-items: center; padding-left: 12px; background: #f0f3f6; color: #666; gap: 8px; border-right: 2px solid #d6dade; margin-right: 3px; height: 40px; }
.tab.active { width: 313px; background: #8a9cab; color: #111; padding-left: 12px; border: 0; margin: 0; gap: 9px; }
.tools { height: 47px; flex: none; display: flex; align-items: center; padding: 0 0 0 10px; background: #f0f3f6; border-top: 5px solid #8a9cab; overflow: hidden; }
.tool { width: 32px; height: 30px; display: flex; align-items: center; justify-content: center; flex: none; }
.tool.cur { width: 26px; margin: 0 3px; }
.tsep { width: 1px; height: 30px; background: #d6dade; margin: 0 3px; flex: none; }
.locale { margin-left: 3px; height: 34px; padding: 0 0 0 7px; width: 31px; display: flex; align-items: center; background: #fff; border-radius: 5px 0 0 5px; flex: none; }
.canvas { flex: 1; min-height: 0; position: relative; background-color: #fff; background-image: linear-gradient(#edf0f2 1px, transparent 1px), linear-gradient(90deg, #edf0f2 1px, transparent 1px); background-size: 9.1px 9.1px; }
.artboard { position: absolute; left: 25px; top: 184px; width: 729px; height: 438px; border: 1px solid #c4c4c4; display: flex; align-items: center; justify-content: center; }
.art-text { font: 91px Lato, sans-serif; color: #3b3b3b; white-space: nowrap; position: relative; top: -3px; }
.lock { position: absolute; left: 732px; top: 162px; width: 20px; height: 20px; fill: #111; }

.right { flex: 1; min-width: 0; display: flex; flex-direction: column; background: #f0f3f6; }
.identity { height: 70px; flex: none; display: flex; align-items: center; border-bottom: 1px solid #d6dade; padding: 0 18px 0 12px; }
.id-grid { display: grid; grid-template-columns: 66px auto; column-gap: 12px; grid-auto-rows: 35px; align-items: center; }
.id-k { text-align: right; }
.id-act { margin-left: auto; }
.props { flex: 1; min-height: 0; }
.prop { height: 35px; display: flex; align-items: center; padding-left: 30px; }
.pk { width: 216px; flex: none; }
.pslot { width: 40px; flex: none; padding-left: 7px; }
.pv.dim { color: #666; font-style: italic; }
.lnk { color: #14b0ea; }
.evplus { margin-left: auto; margin-right: 9px; color: #222; }
.evbody { height: 149px; flex: none; }

.status { height: 38px; flex: none; display: flex; align-items: flex-start; padding-left: 9px; background: #f0f3f6; border-top: 1px solid #aaa; box-shadow: 0 -2px 3px rgba(0,0,0,.12); position: relative; }
.otab { font-size: 15px; color: #235c9e; height: 32px; padding: 7px 3px 0; border-bottom: 8px solid; line-height: 17px; white-space: nowrap; }
.red { width: 97px; border-color: #f00; }
.blue { width: 115px; margin-left: 19px; border-color: #235c9e; }
.xc { width: 16px; height: 16px; margin: 12px 0 0 11px; fill: #111; flex: none; }
.vc { margin-left: auto; margin-right: 6px; display: flex; align-items: center; height: 37px; font-size: 17.65px; }
.vcicon { color: #235c9e; margin-right: 12px; }

.menu { position: absolute; background: #fff; box-shadow: 0 1px 3px rgba(0,0,0,.35); z-index: 5; }
.m1 { left: 171px; top: 326px; width: 219px; }
.m2 { left: 390px; top: 361px; width: 249px; }
.m3 { left: 639px; top: 396px; width: 219px; }
.mi { height: 35px; padding-left: 28px; display: flex; align-items: center; position: relative; white-space: nowrap; color: #111; }
.mi.on { background: #aedff7; border-radius: 4px; }
.sub::after { content: ""; position: absolute; right: 11px; top: 11px; border: 6px solid transparent; border-left: 6px solid #777; border-right: 0; }
.mic { position: absolute; left: 4px; top: 7px; width: 20px; height: 20px; fill: #111; color: #111; }
.ms { height: 2px; margin: 1px 5px 0; background: #e2e4e6; }
```
